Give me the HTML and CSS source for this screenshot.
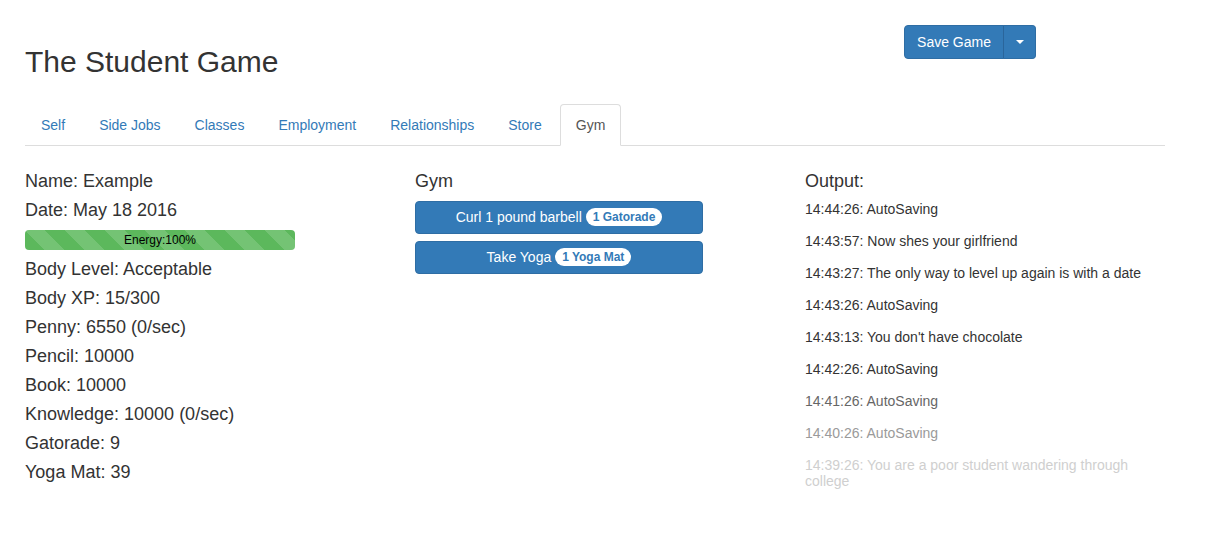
FILE: index.html
```html
<!DOCTYPE html>
<html>
<head>
<meta charset="utf-8">
<title>The Student Game</title>
<link rel="stylesheet" href="styles.css">
</head>
<body>
<div class="page">
  <header class="header">
    <h2 class="title">The Student Game</h2>
    <div class="btn-group">
      <button class="btn btn-main">Save Game</button>
      <button class="btn btn-toggle"><span class="caret"></span></button>
    </div>
  </header>

  <ul class="tabs">
    <li class="tab"><a>Self</a></li>
    <li class="tab"><a>Side Jobs</a></li>
    <li class="tab"><a>Classes</a></li>
    <li class="tab"><a>Employment</a></li>
    <li class="tab"><a>Relationships</a></li>
    <li class="tab"><a>Store</a></li>
    <li class="tab active"><a>Gym</a></li>
  </ul>

  <div class="row">
    <div class="col">
      <h4 class="stat">Name: Example</h4>
      <h4 class="stat">Date: May 18 2016</h4>
      <div class="progress"><div class="progress-bar" style="width:100%">Energy:100%</div></div>
      <h4 class="stat">Body Level: Acceptable</h4>
      <h4 class="stat">Body XP: 15/300</h4>
      <h4 class="stat">Penny: 6550 (0/sec)</h4>
      <h4 class="stat">Pencil: 10000</h4>
      <h4 class="stat">Book: 10000</h4>
      <h4 class="stat">Knowledge: 10000 (0/sec)</h4>
      <h4 class="stat">Gatorade: 9</h4>
      <h4 class="stat">Yoga Mat: 39</h4>
    </div>
    <div class="col">
      <h4 class="stat">Gym</h4>
      <div class="actions">
        <button class="btn action">Curl 1 pound barbell <span class="badge">1 Gatorade</span></button>
        <button class="btn action">Take Yoga <span class="badge">1 Yoga Mat</span></button>
      </div>
    </div>
    <div class="col">
      <h4 class="stat">Output:</h4>
      <div class="log">
        <p class="entry">14:44:26: AutoSaving</p>
        <p class="entry">14:43:57: Now shes your girlfriend</p>
        <p class="entry">14:43:27: The only way to level up again is with a date</p>
        <p class="entry">14:43:26: AutoSaving</p>
        <p class="entry">14:43:13: You don't have chocolate</p>
        <p class="entry">14:42:26: AutoSaving</p>
        <p class="entry fade1">14:41:26: AutoSaving</p>
        <p class="entry fade2">14:40:26: AutoSaving</p>
        <p class="entry fade3">14:39:26: You are a poor student wandering through college</p>
      </div>
    </div>
  </div>
</div>
</body>
</html>
```

FILE: styles.css
```css
* { box-sizing: border-box; }
html, body { margin: 0; padding: 0; background: #fff; }
body {
  font-family: "Liberation Sans", Arial, sans-serif;
  font-size: 14px;
  line-height: 20px;
  color: #333;
}
.page {
  width: 1140px;
  margin-left: 25px;
}
.header {
  display: flex;
  justify-content: space-between;
  height: 104px;
}
.title {
  margin: 45px 0 0 0;
  font-size: 30px;
  line-height: 33px;
  font-weight: 500;
}
.btn-group {
  display: flex;
  margin-top: 25px;
  margin-right: 129px;
  align-self: flex-start;
}
.btn {
  font-family: inherit;
  font-size: 14px;
  color: #fff;
  background: #337ab7;
  border: 1px solid #2e6da4;
  cursor: pointer;
}
.btn-main {
  height: 34px;
  padding: 0 12px;
  line-height: 20px;
  border-radius: 4px 0 0 4px;
}
.btn-toggle {
  height: 34px;
  width: 33px;
  padding: 0;
  border-left: 1px solid #2a659b;
  margin-left: -1px;
  border-radius: 0 4px 4px 0;
  display: flex;
  align-items: center;
  justify-content: center;
}
.caret {
  display: block;
  width: 0;
  height: 0;
  border-top: 4px solid #fff;
  border-left: 4px solid transparent;
  border-right: 4px solid transparent;
}
.tabs {
  list-style: none;
  margin: 0;
  padding: 0;
  display: flex;
  border-bottom: 1px solid #ddd;
  height: 42px;
}
.tab {
  margin-bottom: -1px;
}
.tab a {
  display: block;
  margin-right: 2px;
  padding: 10px 15px;
  line-height: 20px;
  border: 1px solid transparent;
  border-radius: 4px 4px 0 0;
  color: #337ab7;
}
.tab.active a {
  color: #555;
  background: #fff;
  border-color: #ddd #ddd transparent;
}
.row {
  display: grid;
  grid-template-columns: 360px 360px 360px;
  column-gap: 30px;
  padding-top: 16px;
}
.stat {
  margin: 10px 0;
  font-size: 18px;
  line-height: 19px;
  font-weight: 500;
}
.progress {
  width: 270px;
  height: 20px;
  margin: 10px 0;
  border-radius: 4px;
  background: #f5f5f5;
  overflow: hidden;
}
.progress-bar {
  height: 100%;
  background-color: #5cb85c;
  background-image: linear-gradient(45deg, rgba(255,255,255,.15) 25%, transparent 25%, transparent 50%, rgba(255,255,255,.15) 50%, rgba(255,255,255,.15) 75%, transparent 75%, transparent);
  background-size: 40px 40px;
  color: #000;
  font-size: 12px;
  line-height: 20px;
  text-align: center;
}
.actions {
  display: flex;
  flex-direction: column;
  gap: 7px;
  width: 288px;
}
.action {
  height: 33px;
  padding: 0 12px;
  line-height: 19px;
  border-radius: 4px;
  text-align: center;
}
.badge {
  display: inline-block;
  position: relative;
  top: -1px;
  padding: 3px 7px;
  font-size: 12px;
  font-weight: bold;
  line-height: 12px;
  color: #337ab7;
  background: #fff;
  border-radius: 10px;
}
.log { width: 360px; }
.entry {
  margin: 0 0 16px 0;
  line-height: 16px;
  font-size: 14px;
}
.fade1 { color: #666; }
.fade2 { color: #9a9a9a; }
.fade3 { color: #cfcfcf; }
```
